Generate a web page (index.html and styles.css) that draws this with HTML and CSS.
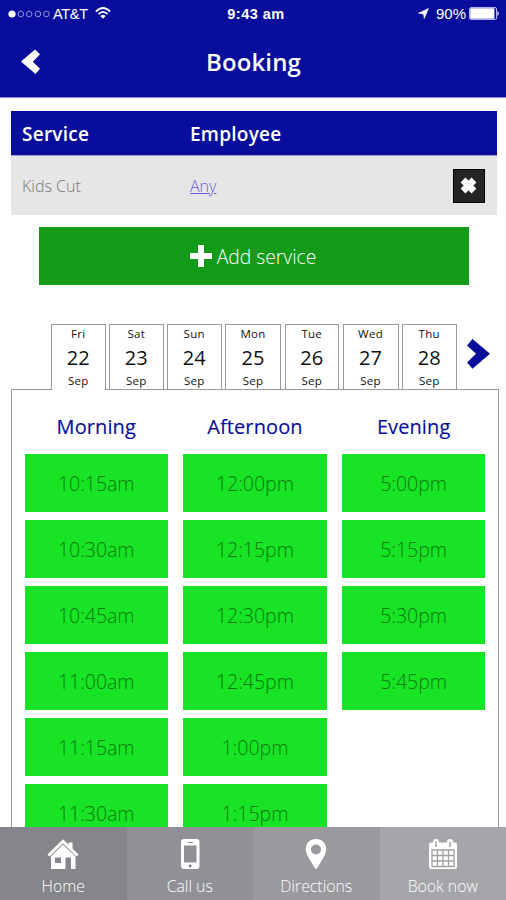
FILE: index.html
```html
<!DOCTYPE html>
<html lang="en">
<head>
<meta charset="utf-8">
<title>Booking</title>
<link rel="stylesheet" href="styles.css">
</head>
<body>
<div class="app">
  <header class="header">
    <div class="status">
      <div class="status-left">
        <svg width="42" height="10" viewBox="0 0 42 10"><circle cx="4" cy="5" r="3.6" fill="#fff"/><g fill="none" stroke="#8f91dc" stroke-width="1"><circle cx="12.8" cy="5" r="2.8"/><circle cx="21.2" cy="5" r="2.8"/><circle cx="29.9" cy="5" r="2.8"/><circle cx="38.4" cy="5" r="2.8"/></g></svg>
        <span class="carrier">AT&amp;T</span>
        <svg class="wifi" width="16" height="12" viewBox="0 0 16 12"><g fill="none" stroke="#fff" stroke-width="1.7"><path d="M.8 4.600Q8-2.600 15.200 4.600"/><path d="M3.400 7.200Q8 2.600 12.600 7.200"/></g><path d="M5.400 9Q8 6.600 10.600 9L8 11.800z" fill="#fff"/></svg>
      </div>
      <div class="clock">9:43 am</div>
      <div class="status-right">
        <svg width="11" height="11" viewBox="0 0 12 12"><path d="M11.500.5L6.800 11.500 6 6.500.5 5.600z" fill="#fff" stroke="#fff" stroke-width=".6"/></svg>
        <span class="percent">90%</span>
        <svg width="31" height="13" viewBox="0 0 31 13"><rect x=".6" y=".6" width="27" height="11.800" rx="1.500" fill="none" stroke="#c5c6f0"/><rect x="1.200" y="1.200" width="24.200" height="10.600" rx="1" fill="#fff"/><path d="M28.500 4Q31 6.500 28.500 9z" fill="#fff"/></svg>
      </div>
    </div>
    <div class="titlebar">
      <svg class="back" width="20" height="26" viewBox="0 0 20 26"><path d="M0 12.500L14 .5 19 5.200 11.800 12.800 19 19.800 14.500 25z" fill="#fff"/></svg>
      <h1>Booking</h1>
    </div>
  </header>

  <main class="content">
    <section class="services">
      <div class="row head"><span>Service</span><span>Employee</span></div>
      <div class="row item">
        <span class="name">Kids Cut</span><a class="any">Any</a>
        <button class="remove"><svg width="20" height="20" viewBox="0 0 20 20"><path d="M4 4L15 15M15 4L4 15" stroke="#fff" stroke-width="6.800"/></svg></button>
      </div>
    </section>
    <button class="add"><svg width="22" height="22" viewBox="0 0 22 22"><path d="M8 0h6v8h8v6h-8v8H8v-8H0V8h8z" fill="#fff"/></svg><span>Add service</span></button>

    <div class="days">
      <div class="day active"><small>Fri</small><b>22</b><small>Sep</small></div>
      <div class="day"><small>Sat</small><b>23</b><small>Sep</small></div>
      <div class="day"><small>Sun</small><b>24</b><small>Sep</small></div>
      <div class="day wide"><small>Mon</small><b>25</b><small>Sep</small></div>
      <div class="day"><small>Tue</small><b>26</b><small>Sep</small></div>
      <div class="day wide"><small>Wed</small><b>27</b><small>Sep</small></div>
      <div class="day"><small>Thu</small><b>28</b><small>Sep</small></div>
      <svg class="next" width="23" height="30" viewBox="0 0 23 30"><path d="M5.500 0L23 14.800 5.500 29.700 0 23.500 9 14.800 0 6.500z" fill="#080e9b"/></svg>
    </div>

    <section class="panel">
      <div class="column"><h2>Morning</h2>
        <div class="slot">10:15am</div><div class="slot">10:30am</div><div class="slot">10:45am</div><div class="slot">11:00am</div><div class="slot">11:15am</div><div class="slot">11:30am</div>
      </div>
      <div class="column"><h2>Afternoon</h2>
        <div class="slot">12:00pm</div><div class="slot">12:15pm</div><div class="slot">12:30pm</div><div class="slot">12:45pm</div><div class="slot">1:00pm</div><div class="slot">1:15pm</div>
      </div>
      <div class="column"><h2>Evening</h2>
        <div class="slot">5:00pm</div><div class="slot">5:15pm</div><div class="slot">5:30pm</div><div class="slot">5:45pm</div>
      </div>
    </section>
  </main>

  <nav class="nav">
    <div class="tab home"><svg width="32" height="32" viewBox="0 0 32 32"><path fill-rule="evenodd" d="M16 6.500L28.500 18V31H24V19.500h-5.500V31H4V18zM8 19.500v5.500h6v-5.500z" fill="#fff"/><path d="M1.500 17.500L16 3.300l14.500 14.200" fill="none" stroke="#85868b" stroke-width="4.200"/><path d="M21.500 4.500h4v8l-4-4z" fill="#fff"/><path d="M1.500 17.500L16 3.300l14.500 14.200" fill="none" stroke="#fff" stroke-width="3"/></svg><span>Home</span></div>
    <div class="tab call"><svg width="32" height="32" viewBox="0 0 32 32"><path fill-rule="evenodd" d="M10 1h12.500q3 0 3 3v24q0 3-3 3H10q-3 0-3-3V4q0-3 3-3zM10 7.500v17h12.500v-17zM13.500 4v1h5.500V4z" fill="#fff"/><circle cx="16.200" cy="28" r="1.400" fill="#77797d"/></svg><span>Call us</span></div>
    <div class="tab directions"><svg width="32" height="32" viewBox="0 0 32 32"><path fill-rule="evenodd" d="M16 1C9.500 1 5.800 5.800 5.800 11.300c0 4 2 7 3.800 10.200L14.800 30q1.200 2 2.400 0l5.200-8.500c1.800-3.200 3.800-6.200 3.800-10.200C26.200 5.800 22.500 1 16 1zm0 5.500a5 5 0 1 1 0 10 5 5 0 1 1 0-10z" fill="#fff"/></svg><span>Directions</span></div>
    <div class="tab book"><svg width="32" height="32" viewBox="0 0 32 32"><path d="M4 4.500h24q2 0 2 2V29q0 2-2 2H4q-2 0-2-2V6.500q0-2 2-2z" fill="#fff"/><path d="M6 8V4q0-3 3-3t3 3v4zM20 8V4q0-3 3-3t3 3v4z" fill="#fff"/><path d="M9 3.500v5.500M23 3.500v5.500" stroke="#a5a6aa" stroke-width="1.600"/><path d="M5 12h22v16.500H5zM5 17.500h22M5 23h22M10.500 12v16.500M16 12v16.500M21.500 12v16.500" fill="none" stroke="#a0a1a5" stroke-width="1.300"/></svg><span>Book now</span></div>
  </nav>
</div>
</body>
</html>
```

FILE: styles.css
```css
* { box-sizing: border-box; }
body { margin: 0; font-family: "Open Sans", "Noto Sans", sans-serif; background: #fff; }
svg { display: block; flex: none; }
button { border: 0; padding: 0; font: inherit; }
.app { width: 506px; height: 900px; overflow: hidden; display: flex; flex-direction: column; }

.header { height: 98px; flex: none; background: #080e9b; color: #fff; border-bottom: 1px solid #8487cd; }
.status { display: grid; grid-template-columns: 1fr auto 1fr; align-items: center; height: 27px; padding: 0 6px 0 8px; font-family: "Liberation Sans", sans-serif; }
.status-left, .status-right { display: flex; align-items: center; }
.carrier { font-size: 14.500px; margin-left: 3px; letter-spacing: -.3px; }
.wifi { margin-left: 7px; margin-top: -2px; }
.clock { font-size: 14.500px; font-weight: 700; margin-left: 4px; letter-spacing: .5px; }
.status-right { justify-content: flex-end; }
.percent { font-size: 15px; margin: 0 3px 0 7px; }
.titlebar { display: grid; grid-template-columns: 60px 1fr 60px; align-items: center; height: 70px; }
.back { margin-left: 20.500px; margin-top: -1px; }
h1 { margin: 0; text-align: center; font-size: 24px; line-height: 70px; padding-left: 1px; font-weight: 600; letter-spacing: .1px; }

.content { flex: 1; min-height: 0; overflow: hidden; padding: 13px 7px 0 11px; }
.services { width: 485.500px; }
.row { display: grid; grid-template-columns: 168px 1fr auto; align-items: center; padding: 0 12px 0 11px; }
.head { height: 45px; padding-top: 2px; background: #080e9b; color: #fff; font-size: 19px; font-weight: 600; letter-spacing: .25px; border-bottom: 1px solid #9a9dcd; }
.item { height: 59px; background: #e6e6e6; color: #777; font-size: 16px; font-weight: 300; }
.any { color: #665fe0; text-decoration: underline; }
.remove { width: 32px; height: 34px; display: grid; place-items: center; background: #242424; border: 1px solid #000; }
.add { width: 430px; height: 58px; margin: 12px 0 0 28px; padding-right: 2px; display: flex; align-items: center; justify-content: center; gap: 5px; background: #139b19; color: #fff; font-size: 19.300px; font-weight: 300; }
.add span { padding-top: 1px; }

.days { display: flex; margin: 39px 0 0 40px; height: 65px; gap: 3.500px; position: relative; }
.day { width: 54.500px; height: 65px; border: 1px solid #999; border-bottom: 0; background: #fff; display: flex; flex-direction: column; align-items: center; color: #111; }
.day.wide { width: 56px; }
.day.active { height: 66px; position: relative; }
.day small { font-size: 11.500px; line-height: 18px; letter-spacing: .3px; }
.day b { font-size: 20px; line-height: 29px; font-weight: 400; }
.next { margin: 15px 0 0 7px; }

.panel { height: 600px; border: 1px solid #999; display: grid; grid-template-columns: repeat(3, 143.500px); column-gap: 15.200px; padding: 0 12.500px; align-items: start; }
.column { display: flex; flex-direction: column; gap: 8px; }
h2 { margin: 0 0 -8px; height: 64px; line-height: 74px; text-align: center; color: #080e9b; font-size: 20px; font-weight: 400; letter-spacing: .1px; -webkit-text-stroke: .15px #080e9b; }
.slot { height: 58px; line-height: 60px; text-align: center; background: #18e325; color: #067b0c; font-size: 19.500px; font-weight: 300; }

.nav { height: 73px; flex: none; display: grid; grid-template-columns: repeat(4, 1fr); color: #fff; font-size: 15.800px; font-weight: 300; }
.tab { display: flex; flex-direction: column; align-items: center; padding-top: 11px; line-height: 32px; }
.home { background: #85868b; }
.call { background: #909196; }
.directions { background: #99999e; }
.book { background: #a5a6aa; }
```
